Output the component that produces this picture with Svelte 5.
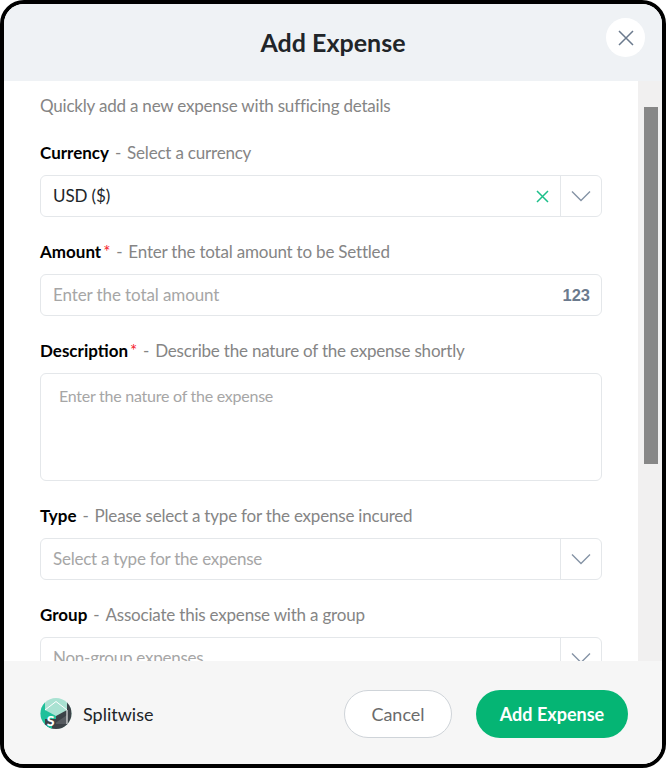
<script>
    let currency = 'USD ($)';
</script>

<div class="modal">
    <header class="head">
        <h2>Add Expense</h2>
        <button class="close" aria-label="Close">
            <svg width="16" height="16" viewBox="0 0 16 16"><path d="M1 1l14 14M15 1L1 15" stroke="#6b7a8d" stroke-width="1.5" fill="none" /></svg>
        </button>
    </header>

    <div class="body">
        <div class="content">
            <p class="intro">Quickly add a new expense with sufficing details</p>

            <div class="field">
                <div class="label first"><b>Currency</b><span class="dash">-</span><span>Select a currency</span></div>
                <div class="box">
                    <span class="value">{currency}</span>
                    <svg class="clear" width="13" height="13" viewBox="0 0 13 13"><path d="M1 1l11 11M12 1L1 12" stroke="#1dbf8a" stroke-width="1.5" fill="none" /></svg>
                    <span class="caret">
                        <svg width="20" height="12" viewBox="0 0 20 12"><path d="M1 1.5l9 9 9-9" stroke="#8593a5" stroke-width="1.4" fill="none" /></svg>
                    </span>
                </div>
            </div>

            <div class="field">
                <div class="label"><b>Amount</b><i>*</i><span class="dash">-</span><span>Enter the total amount to be Settled</span></div>
                <div class="box">
                    <span class="value ph">Enter the total amount</span>
                    <span class="unit">123</span>
                </div>
            </div>

            <div class="field">
                <div class="label"><b>Description</b><i>*</i><span class="dash">-</span><span>Describe the nature of the expense shortly</span></div>
                <div class="area">Enter the nature of the expense</div>
            </div>

            <div class="field">
                <div class="label"><b>Type</b><span class="dash">-</span><span>Please select a type for the expense incured</span></div>
                <div class="box">
                    <span class="value ph narrow">Select a type for the expense</span>
                    <span class="caret">
                        <svg width="20" height="12" viewBox="0 0 20 12"><path d="M1 1.5l9 9 9-9" stroke="#8593a5" stroke-width="1.4" fill="none" /></svg>
                    </span>
                </div>
            </div>

            <div class="field">
                <div class="label"><b>Group</b><span class="dash">-</span><span>Associate this expense with a group</span></div>
                <div class="box">
                    <span class="value ph narrow">Non-group expenses</span>
                    <span class="caret">
                        <svg width="20" height="12" viewBox="0 0 20 12"><path d="M1 1.5l9 9 9-9" stroke="#8593a5" stroke-width="1.4" fill="none" /></svg>
                    </span>
                </div>
            </div>
        </div>

        <div class="track"><div class="thumb"></div></div>
    </div>

    <footer class="foot">
        <div class="brand">
            <svg width="32" height="32" viewBox="0 0 32 32">
                <defs><clipPath id="disc"><circle cx="16" cy="15.5" r="15.5" /></clipPath></defs>
                <g clip-path="url(#disc)">
                    <rect width="32" height="32" fill="#a9e2d2" />
                    <path d="M0 0h5v32H0z" fill="#1fc09a" />
                    <path d="M27 0h5v32h-5z" fill="#3c4247" />
                    <path d="M16 18L27 12V26H5z" fill="#3c4247" />
                    <path d="M27 17V26H14z" fill="#565b60" />
                    <path d="M5 12L16 18V21H5z" fill="#1fc09a" />
                    <path d="M5 21h11v5H5z" fill="#3c4247" />
                    <path d="M0 26h32v6H0z" fill="#3c4247" />
                    <path d="M5 27h7v4H5z" fill="#1fc09a" />
                    <path d="M5 12L16 3.5 27 12v14" stroke="#fff" stroke-width="1" fill="none" />
                    <text x="10.5" y="28" font-size="14" font-weight="900" text-anchor="middle" fill="#fff">S</text>
                </g>
            </svg>
            <span>Splitwise</span>
        </div>
        <div class="actions">
            <button class="cancel">Cancel</button>
            <button class="submit">Add Expense</button>
        </div>
    </footer>
</div>

<style>
    :global(body) {
        background: #fff;
    }

    .modal {
        box-sizing: border-box;
        height: 768px;
        display: flex;
        flex-direction: column;
        border: 4px solid #000;
        border-radius: 24px;
        overflow: hidden;
        font-family: Lato, sans-serif;
        font-size: 17px;
        color: #212529;
        background: #fff;
    }

    .head {
        flex: none;
        box-sizing: border-box;
        height: 77px;
        padding-bottom: 2px;
        background: #eff2f5;
        display: flex;
        align-items: center;
        justify-content: center;
        position: relative;
    }

    h2 {
        margin: 0;
        font-size: 25px;
        font-weight: 700;
        color: #212529;
    }

    .close {
        position: absolute;
        top: 14px;
        right: 17px;
        width: 39px;
        height: 39px;
        padding: 0;
        border: 0;
        border-radius: 50%;
        background: #fff;
        display: flex;
        align-items: center;
        justify-content: center;
    }

    .body {
        flex: 1;
        min-height: 0;
        overflow: hidden;
        display: flex;
    }

    .content {
        flex: 1;
        min-width: 0;
        padding: 14px 36px 0;
    }

    .track {
        flex: none;
        width: 24px;
        box-sizing: border-box;
        padding: 26px 4px 0 6px;
        background: #f1f0f0;
    }

    .thumb {
        height: 357px;
        background: #878787;
    }

    .intro {
        margin: 0 0 25px;
        line-height: 22px;
        letter-spacing: -0.2px;
        color: #858585;
    }

    .field {
        margin-bottom: 23px;
    }

    .label {
        display: flex;
        padding-top: 1px;
        line-height: 22px;
        margin-bottom: 11px;
        letter-spacing: -0.2px;
        color: #858585;
    }

    .label.first {
        padding-top: 0;
    }

    .label b {
        font-weight: 700;
        letter-spacing: 0;
        color: #000;
    }

    .label i {
        font-style: normal;
        color: #f5222d;
        margin-left: 2px;
    }

    .dash {
        margin: 0 6px;
    }

    .box {
        box-sizing: border-box;
        height: 42px;
        display: flex;
        align-items: center;
        border: 1px solid #e4e7ea;
        border-radius: 6px;
        padding: 0 0 2px 12px;
    }

    .value {
        flex: 1;
        letter-spacing: -0.1px;
        color: #212529;
    }

    .ph {
        color: #a6a6a6;
    }

    .narrow {
        letter-spacing: -0.25px;
    }

    .clear {
        margin: 2px 11px 0 0;
    }

    .caret {
        box-sizing: border-box;
        align-self: stretch;
        width: 41px;
        margin-bottom: -2px;
        border-left: 1px solid #e4e7ea;
        display: flex;
        align-items: center;
        justify-content: center;
    }

    .unit {
        font-weight: 700;
        font-family: "Liberation Sans", sans-serif;
        font-size: 16.5px;
        color: #6b7a8d;
        margin: 2px 11px 0 0;
    }

    .area {
        box-sizing: border-box;
        height: 108px;
        border: 1px solid #e4e7ea;
        border-radius: 6px;
        padding: 12px 18px;
        font-size: 16px;
        letter-spacing: -0.25px;
        color: #a6a6a6;
    }

    .foot {
        flex: none;
        height: 103px;
        box-sizing: border-box;
        background: #f6f6f6;
        display: flex;
        align-items: center;
        justify-content: space-between;
        padding: 3px 34px 0 36px;
    }

    .brand {
        display: flex;
        align-items: center;
        gap: 11px;
        font-size: 18px;
        color: #212529;
    }

    .actions {
        display: flex;
        gap: 24px;
    }

    button {
        font-family: inherit;
        font-size: 18px;
    }

    .cancel {
        width: 108px;
        height: 48px;
        border: 1px solid #cfd4d9;
        border-radius: 24px;
        background: #fff;
        color: #6b6b6b;
    }

    .submit {
        width: 152px;
        height: 48px;
        border: 0;
        border-radius: 24px;
        background: #05b574;
        color: #fff;
        font-weight: 700;
    }
</style>
